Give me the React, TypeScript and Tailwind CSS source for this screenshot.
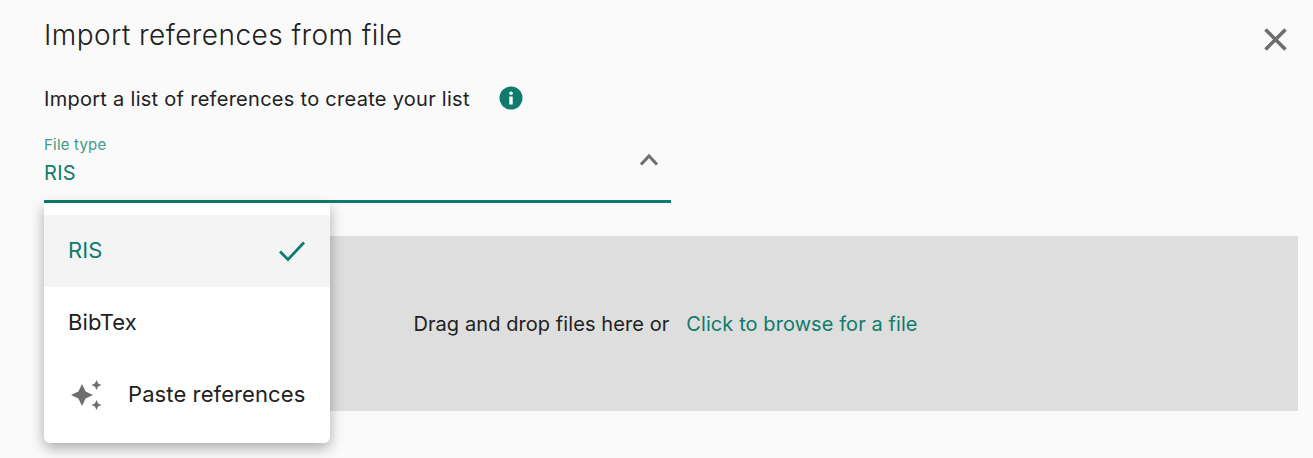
import React from "react";

export default function App() {
  return (
    <div className="relative h-[458px] w-[1313px] overflow-hidden bg-[#fafafa] pl-[44px] pr-[15px] text-[#212121] font-['Inter',sans-serif]">
      <div className="flex h-[70px] items-start justify-between">
        <h1 className="mt-[17px] text-[28px] leading-[36px] font-light tracking-[0.44px]">Import references from file</h1>
        <svg className="mt-[28px] mr-[11px]" width="23" height="23" viewBox="0 0 23 23" fill="none" stroke="#6e6e6e" strokeWidth="3.6">
          <path d="M1.5 1.5 21.5 21.5M21.5 1.5 1.5 21.5" />
        </svg>
      </div>
      <div className="flex h-[56px] items-center">
        <span className="text-[20px] leading-[24px] tracking-[0.28px] pt-[1px]">Import a list of references to create your list</span>
        <svg className="ml-[29px]" width="24" height="24" viewBox="0 0 24 24">
          <circle cx="12" cy="12" r="11.5" fill="#0f7b6c" />
          <circle cx="12" cy="7.2" r="1.8" fill="#fff" />
          <rect x="10.3" y="10.5" width="3.4" height="8" fill="#fff" />
        </svg>
      </div>
      <div className="flex h-[77px] w-[627px] items-start justify-between border-b-[3px] border-[#0f7b6c]">
        <div className="flex flex-col pt-[10px]">
          <span className="text-[15px] leading-[18px] tracking-[0.2px] text-[#3f9a88]">File type</span>
          <span className="mt-[7px] text-[20px] leading-[24px] tracking-[0.3px] text-[#0f7b6c]">RIS</span>
        </div>
        <svg className="mt-[27px] mr-[12px]" width="20" height="13" viewBox="0 0 20 13" fill="none" stroke="#6e6e6e" strokeWidth="3">
          <path d="M2 11.5 10 3l8 8.5" />
        </svg>
      </div>
      <div className="mt-[33px] flex h-[175px] w-[1254px] items-center justify-center bg-[#dedede] pr-[11px] text-[20px] leading-[24px] tracking-[0.08px]">
        <span>Drag and drop files here or</span>
        <span className="ml-[17px] text-[#0f7b6c]">Click to browse for a file</span>
      </div>

      <div className="absolute left-[44px] top-[203px] w-[286px] rounded-b-[6px] bg-white py-[12px] text-[22px] leading-[28px] tracking-[0.1px] shadow-[0_5px_14px_rgba(0,0,0,0.32)]">
        <div className="flex h-[72px] items-center justify-between bg-[#f4f4f4] px-[24px] text-[#0f7b6c]">
          <span className="pb-[2px]">RIS</span>
          <svg width="28" height="22" viewBox="0 0 28 22" fill="none" stroke="#0f7b6c" strokeWidth="2.8">
            <path d="M2 11.5 10 19.5 26 2.5" />
          </svg>
        </div>
        <div className="flex h-[72px] items-center pl-[24px]">
          <span className="pb-[2px]">BibTex</span>
        </div>
        <div className="flex h-[72px] items-center pl-[26px]">
          <svg width="34" height="34" viewBox="0 0 34 34" fill="#6e6e6e">
            <path d="M12 6l3.6 7.4L23 17l-7.4 3.6L12 28l-3.6-7.4L1 17l7.4-3.6z" />
            <path d="M26.5 2l1.6 3.4L31.5 7l-3.4 1.6L26.5 12l-1.6-3.4L21.5 7l3.4-1.6z" />
            <path d="M26.5 22l1.6 3.4 3.4 1.6-3.4 1.6-1.6 3.4-1.6-3.4-3.4-1.6 3.4-1.6z" />
          </svg>
          <span className="ml-[24px] pb-[2px]">Paste references</span>
        </div>
      </div>
    </div>
  );
}
